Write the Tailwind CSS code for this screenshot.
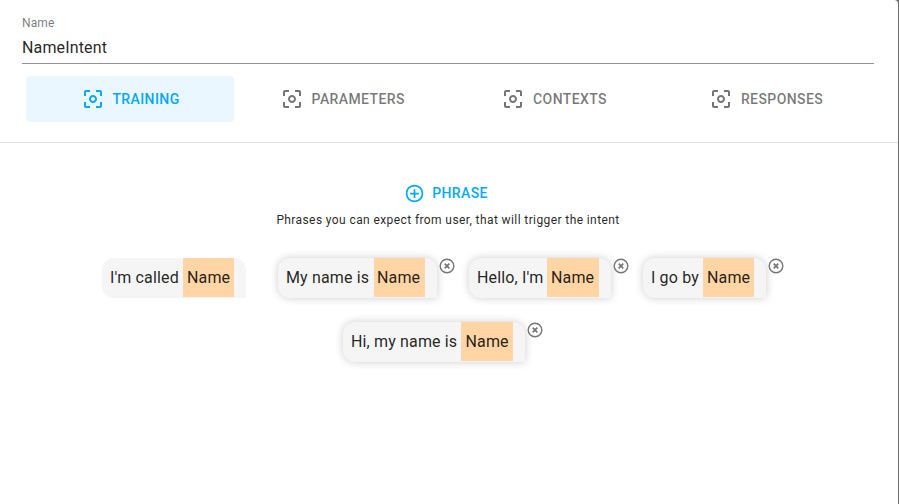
<!DOCTYPE html>
<html lang="en">
<head>
<meta charset="utf-8">
<title>NameIntent</title>
<script src="https://cdn.jsdelivr.net/npm/@tailwindcss/browser@4"></script>
</head>
<body class="h-[504px] w-[899px] overflow-hidden bg-[#6e6e6e] font-['Roboto',sans-serif] text-black/87">
<svg class="hidden">
  <symbol id="focus" viewBox="0 0 24 24"><path d="M5 15H3v4c0 1.1.9 2 2 2h4v-2H5v-4zM5 5h4V3H5c-1.1 0-2 .9-2 2v4h2V5zm14-2h-4v2h4v4h2V5c0-1.1-.9-2-2-2zm0 16h-4v2h4c1.1 0 2-.9 2-2v-4h-2v4zM12 8c-2.21 0-4 1.79-4 4s1.79 4 4 4 4-1.79 4-4-1.79-4-4-4zm0 6c-1.100 0-2-.9-2-2s.9-2 2-2 2 .9 2 2-.9 2-2 2z"/></symbol>
  <symbol id="close" viewBox="0 0 16 16"><circle cx="8" cy="8" r="6.8" fill="none" stroke="currentColor" stroke-width="1.400"/><path d="M5.700 5.700l4.600 4.600M10.300 5.700l-4.600 4.600" fill="none" stroke="currentColor" stroke-width="1.700"/></symbol>
</svg>
<main class="h-[520px] w-[898px] rounded-tr-[4px] bg-white">
  <header class="h-[143px] border-b border-[#e0e0e0] pl-[22px] pr-6 pt-4">
    <div class="flex h-12 flex-col border-b border-[#949494]">
      <label class="h-[14px] text-[12px] leading-[14px] tracking-[0.11px] text-black/54">Name</label>
      <div class="mt-2 text-[16px] leading-[20px] tracking-[0.15px]">NameIntent</div>
    </div>
    <nav class="ml-1 mt-3 flex gap-1 text-[14px] font-medium leading-[24px] tracking-[0.4px] text-black/54">
      <div class="flex h-[46px] w-[208px] shrink-0 items-center justify-center gap-[7px] rounded-[4px] bg-[#ebf7ff] pl-px text-[#03a9f4]"><svg class="size-6 fill-current"><use href="#focus"/></svg><span>TRAINING</span></div>
      <div class="flex h-[46px] w-[208px] shrink-0 items-center justify-center gap-[7.5px] pl-px"><svg class="size-6 fill-current"><use href="#focus"/></svg><span>PARAMETERS</span></div>
      <div class="flex h-[46px] w-[208px] shrink-0 items-center justify-center gap-2"><svg class="size-6 fill-current"><use href="#focus"/></svg><span>CONTEXTS</span></div>
      <div class="flex h-[46px] w-[208px] shrink-0 items-center justify-center gap-2"><svg class="size-6 fill-current"><use href="#focus"/></svg><span>RESPONSES</span></div>
    </nav>
  </header>
  <section class="pt-[38px]">
    <div class="flex h-6 items-center justify-center gap-[7px] pr-[6px] text-[14px] font-medium tracking-[0.4px] text-[#03a9f4]">
      <svg class="size-[21px] fill-current" viewBox="0 0 24 24"><path d="M13 7h-2v4H7v2h4v4h2v-4h4v-2h-4V7zm-1-5C6.480 2 2 6.480 2 12s4.480 10 10 10 10-4.480 10-10S17.520 2 12 2zm0 18c-4.410 0-8-3.590-8-8s3.590-8 8-8 8 3.590 8 8-3.590 8-8 8z"/></svg>
      <span>PHRASE</span>
    </div>
    <p class="mt-[5px] pr-[2px] text-center text-[12px] leading-[20px] tracking-[0.4px]">Phrases you can expect from user, that will trigger the intent</p>
    <div class="mt-[28px] flex pl-[102px] text-[16px] leading-[39px] tracking-[0.15px] whitespace-nowrap">
      <div class="mr-8 flex h-10 w-[144px] justify-between rounded-[12px] rounded-br-none bg-[#f5f5f5] pl-2 pr-3"><span>I'm called</span><span class="h-[39px] w-[51px] bg-[#ffd5a5] pl-1">Name</span></div>
      <div class="flex h-10 w-[159px] justify-between rounded-[12px] rounded-br-none bg-[#f5f5f5] pl-2 pr-3 shadow-[0_0_8px_rgba(0,0,0,0.2)]"><span>My name is</span><span class="h-[39px] w-[51px] bg-[#ffd5a5] pl-[3px]">Name</span></div>
      <svg class="ml-[2px] mr-[14px] size-4 text-[#757575]"><use href="#close"/></svg>
      <div class="flex h-10 w-[142px] justify-between rounded-[12px] rounded-br-none bg-[#f5f5f5] pl-2 pr-3 shadow-[0_0_8px_rgba(0,0,0,0.2)]"><span>Hello, I'm</span><span class="h-[39px] w-[52px] bg-[#ffd5a5] pl-1">Name</span></div>
      <svg class="ml-[2px] mr-[14px] size-4 text-[#757575]"><use href="#close"/></svg>
      <div class="flex h-10 w-[123px] justify-between rounded-[12px] rounded-br-none bg-[#f5f5f5] pl-2 pr-3 shadow-[0_0_8px_rgba(0,0,0,0.2)]"><span>I go by</span><span class="h-[39px] w-[51px] bg-[#ffd5a5] pl-1">Name</span></div>
      <svg class="ml-[2px] size-4 text-[#757575]"><use href="#close"/></svg>
    </div>
    <div class="mt-6 flex pl-[343px] text-[16px] leading-[39px] tracking-[0.15px] whitespace-nowrap">
      <div class="flex h-10 w-[182px] justify-between rounded-[12px] rounded-br-none bg-[#f5f5f5] pl-2 pr-3 shadow-[0_0_8px_rgba(0,0,0,0.2)]"><span>Hi, my name is</span><span class="h-[39px] w-[52px] bg-[#ffd5a5] pl-[4.500px]">Name</span></div>
      <svg class="ml-[2px] size-4 text-[#757575]"><use href="#close"/></svg>
    </div>
  </section>
</main>
</body>
</html>
